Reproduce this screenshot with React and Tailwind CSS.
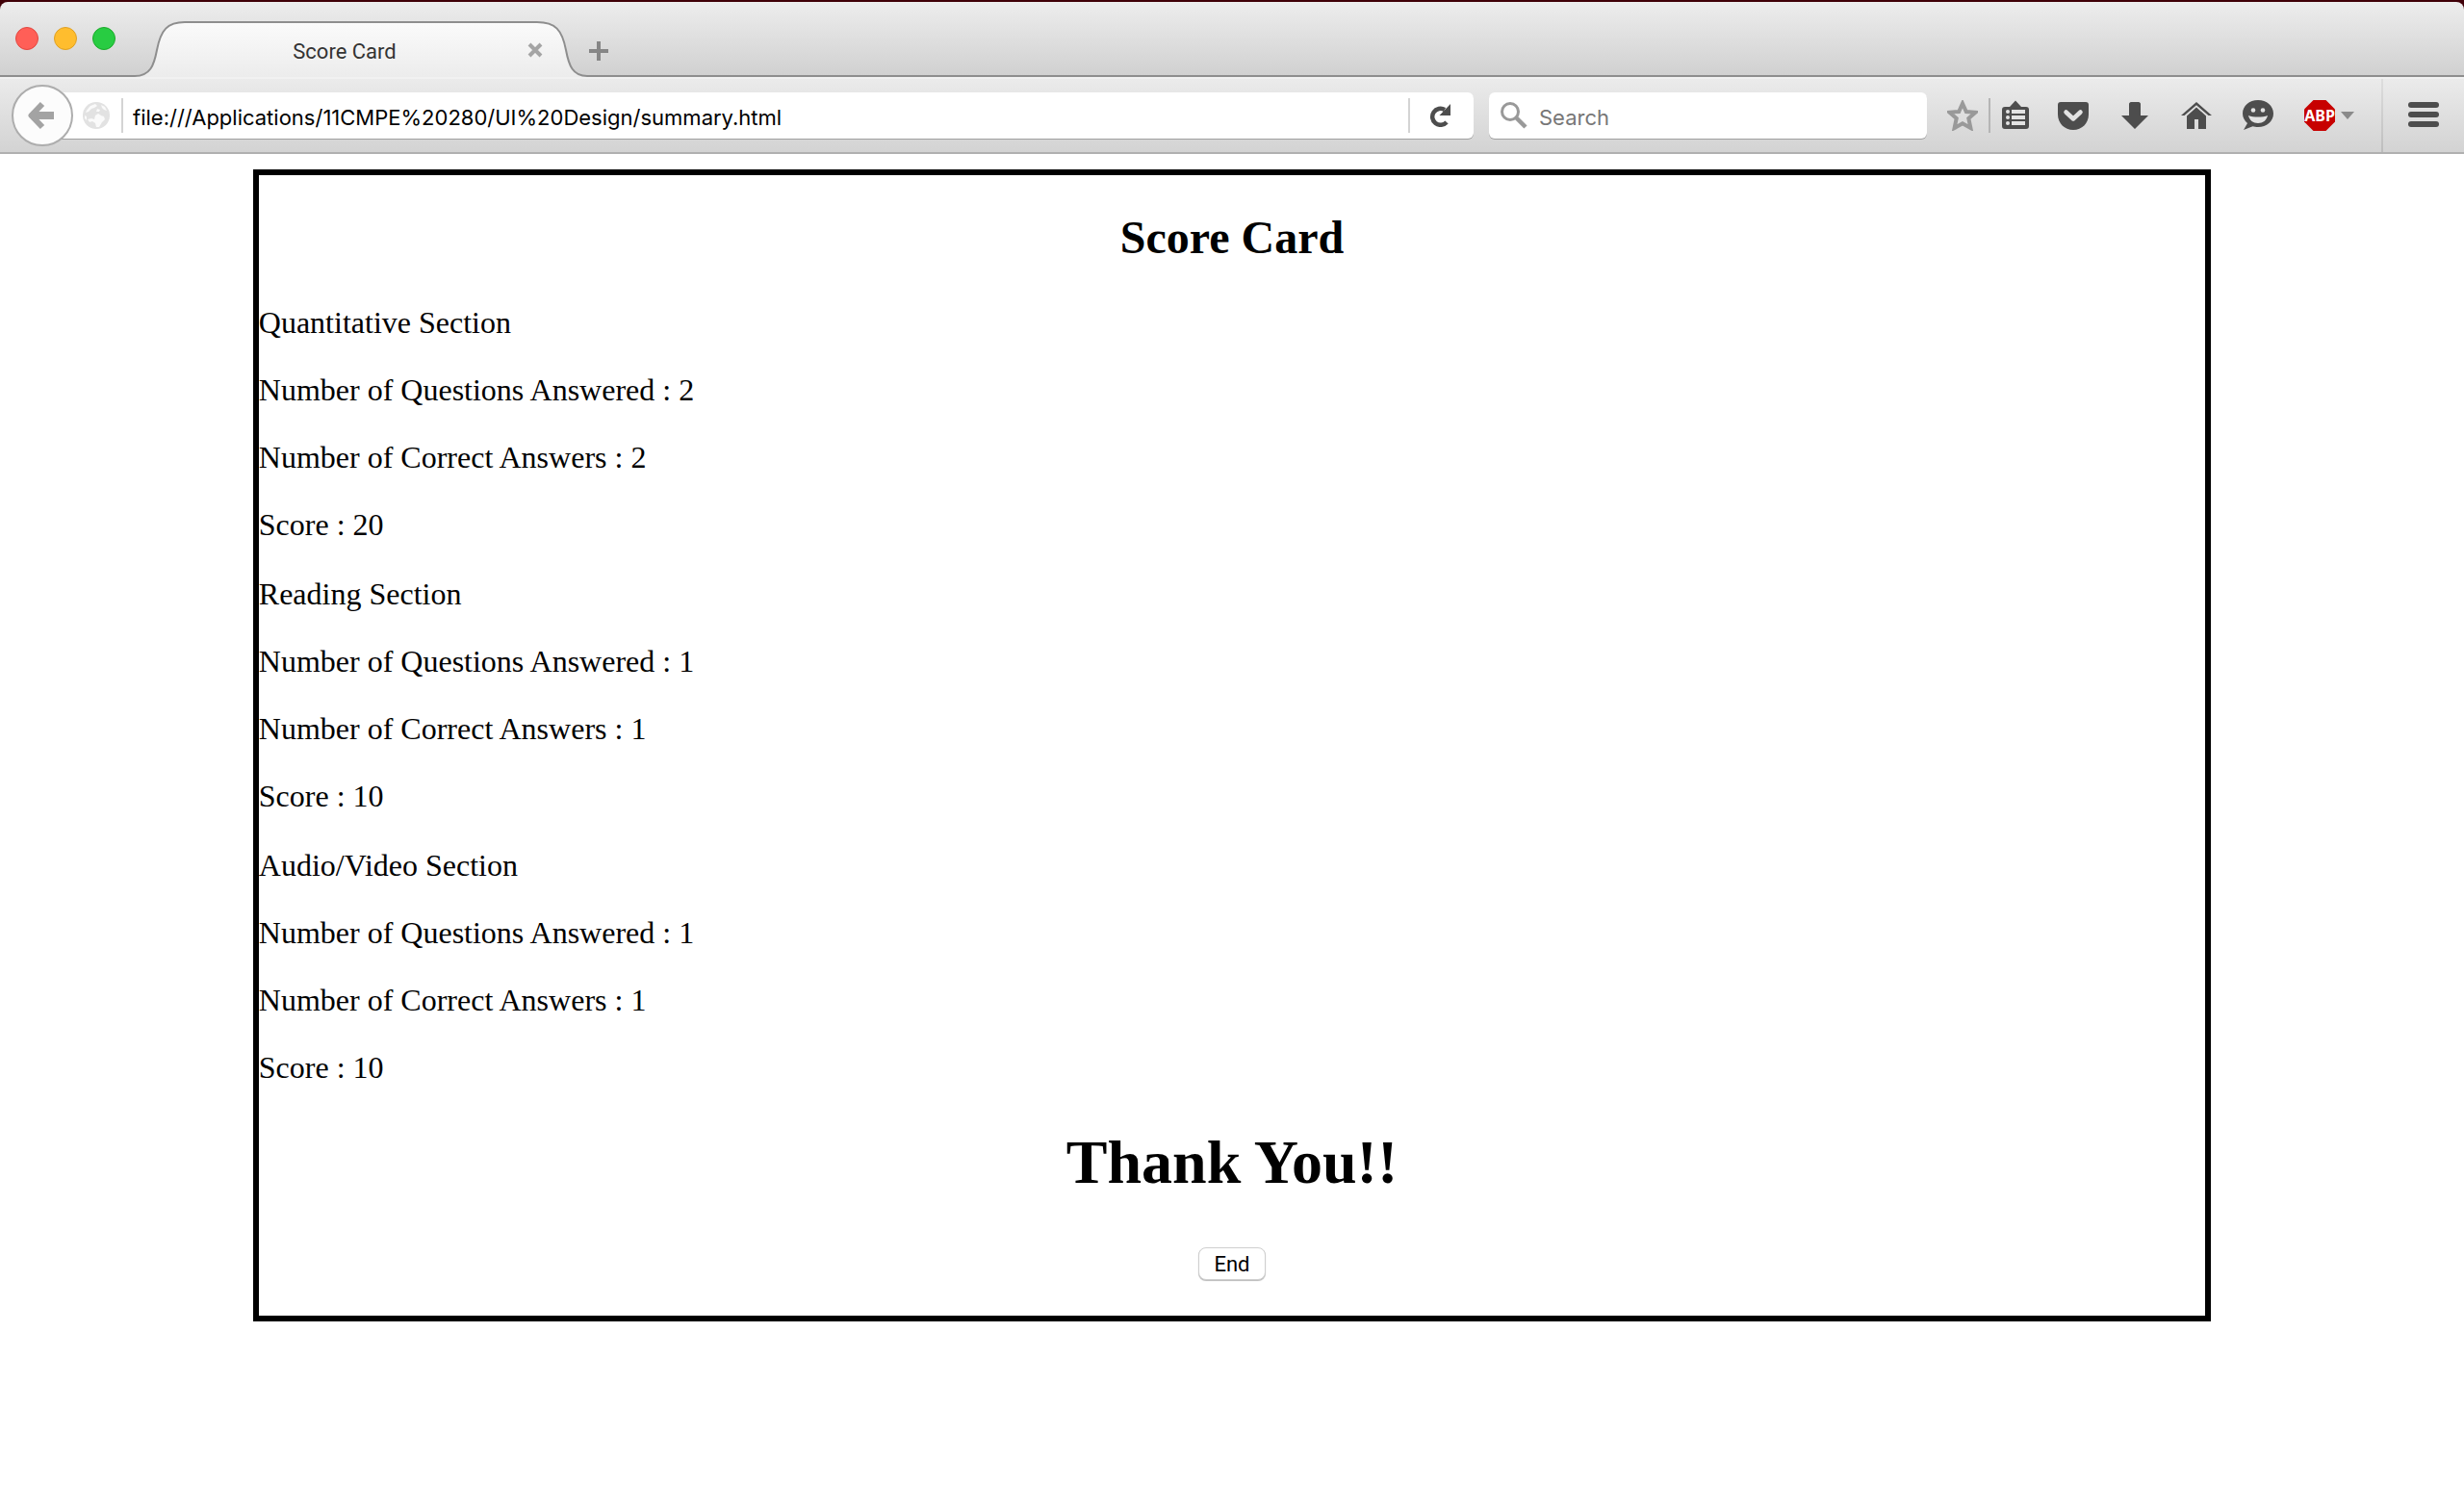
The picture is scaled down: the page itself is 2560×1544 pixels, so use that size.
const sections = [
  { name: "Quantitative Section", answered: 2, correct: 2, score: 20 },
  { name: "Reading Section", answered: 1, correct: 1, score: 10 },
  { name: "Audio/Video Section", answered: 1, correct: 1, score: 10 },
];

function Lights() {
  return (
    <div className="flex gap-4 pl-4 pt-[26px]">
      <button aria-label="Close window" className="size-6 rounded-full border border-[#e2463f] bg-[#ff5f57]" />
      <button aria-label="Minimize window" className="size-6 rounded-full border border-[#dfa023] bg-[#ffbd2e]" />
      <button aria-label="Zoom window" className="size-6 rounded-full border border-[#1aab29] bg-[#28cc42]" />
    </div>
  );
}

function TabBar() {
  return (
    <div className="flex h-[78px] overflow-hidden rounded-t-lg bg-linear-to-b from-[#ededed] to-[#d0d0d0]">
      <div className="w-[140px] shrink-0 border-b-2 border-[#8e8e8e]">
        <Lights />
      </div>
      <div className="relative flex w-[472px] shrink-0 items-center">
        <svg className="absolute inset-0 h-[78px] w-[472px]" viewBox="0 0 472 78" fill="none" aria-hidden="true">
          <defs>
            <linearGradient id="tab" x1="0" y1="20" x2="0" y2="78" gradientUnits="userSpaceOnUse">
              <stop stopColor="#fbfbfb" />
              <stop offset="1" stopColor="#ececec" />
            </linearGradient>
          </defs>
          <path d="M0 77C16 77 20 66 23 50C27 29 34 21 52 21H418C437 21 444 29 448 50C451 66 455 77 470 77H472V79H0Z" fill="url(#tab)" />
          <path d="M0 77C16 77 20 66 23 50C27 29 34 21 52 21H418C437 21 444 29 448 50C451 66 455 77 470 77H472" stroke="#8e8e8e" strokeWidth="2" />
        </svg>
        <span className="relative w-full pr-9 pt-[26px] text-center font-['Roboto','Inter',sans-serif] text-[22px] leading-7 text-[#333]">
          Score Card
        </span>
        <button aria-label="Close tab" className="absolute right-12 top-[42px]">
          <svg className="size-4" viewBox="0 0 16 16" stroke="#a4a4a4" strokeWidth="4">
            <path d="M2 2L14 14M14 2L2 14" />
          </svg>
        </button>
      </div>
      <div className="grow border-b-2 border-[#8e8e8e]">
        <button aria-label="New tab" className="block pt-[41px]">
          <svg className="size-5" viewBox="0 0 20 20" stroke="#868686" strokeWidth="4">
            <path d="M10 0V20M0 10H20" />
          </svg>
        </button>
      </div>
    </div>
  );
}

function IconButton({ label, color = "#4d4d4d", children }) {
  return (
    <button aria-label={label} className="shrink-0">
      <svg className="size-8" viewBox="0 0 32 32" fill={color}>
        {children}
      </svg>
    </button>
  );
}

function AddressBar() {
  return (
    <div className="flex min-w-0 grow items-center">
      <button
        aria-label="Back"
        className="z-10 flex size-16 shrink-0 items-center justify-center rounded-full border-2 border-[#adadad] bg-[#fcfcfc]"
      >
        <svg className="size-8" viewBox="0 0 32 32" fill="none" stroke="#a3a3a3" strokeWidth="8" aria-hidden="true">
          <path d="M5 16H28" />
          <path d="M16 4L4.500 16L16 28" strokeWidth="6" strokeLinejoin="round" />
        </svg>
      </button>
      <div className="-ml-8 flex h-12 min-w-0 grow items-center rounded-r-md bg-white pl-[42px] shadow-[0_1px_0_#a0a0a0]">
        <svg className="size-7 shrink-0" viewBox="0 0 28 28" aria-hidden="true">
          <circle cx="14" cy="14" r="14" fill="#e2e2e2" />
          <g fill="#fafafa">
            <path d="M8 4L13 2L15 4L12 6L9 7L6 10L3 11C4 8 6 6 8 4Z" />
            <path d="M19 3L23 5L25 9L22 8L20 6Z" />
            <path d="M13 14L16 12L19 14L22 15L23 18L20 21L17 26H14L13 22L10 20L7 21L5 18L9 17L12 18Z" />
            <path d="M15 7L18 8L17 10L14 10Z" />
            <path d="M2 14L4 15L4 19L2 17Z" />
          </g>
        </svg>
        <span className="ml-3 h-9 w-0.5 shrink-0 bg-[#d4d4d4]" />
        <input
          aria-label="Address"
          defaultValue="file:///Applications/11CMPE%20280/UI%20Design/summary.html"
          className="ml-2.5 mt-1 min-w-0 grow bg-transparent font-['Inter','Roboto',sans-serif] text-[22px] leading-8 text-black outline-none"
        />
        <span className="h-9 w-0.5 shrink-0 bg-[#d4d4d4]" />
        <button aria-label="Reload" className="ml-5 mr-[22px] shrink-0">
          <svg className="size-6" viewBox="0 0 24 24" aria-hidden="true">
            <path d="M18 19A8.500 8.500 0 1 1 16 6" fill="none" stroke="#4d4d4d" strokeWidth="4.500" />
            <path d="M22 0V12H10.500Z" fill="#4d4d4d" />
          </svg>
        </button>
      </div>
    </div>
  );
}

function Toolbar() {
  return (
    <div className="flex h-20 items-center border-b-2 border-t-2 border-b-[#b0b0b0] border-t-[#f1f1f1] bg-linear-to-b from-[#ebebeb] to-[#d3d3d3] pl-3 pr-[26px]">
      <AddressBar />
      <label className="ml-4 flex h-12 w-[455px] shrink-0 items-center rounded-md bg-white pl-3 shadow-[0_1px_0_#a0a0a0]">
        <svg className="size-7 shrink-0" viewBox="0 0 28 28" fill="none" stroke="#999" aria-hidden="true">
          <circle cx="10" cy="10" r="8.500" strokeWidth="3" />
          <path d="M16 16L26 26" strokeWidth="4.500" />
        </svg>
        <input
          aria-label="Search"
          placeholder="Search"
          className="ml-3 mt-1 min-w-0 grow bg-transparent font-['Inter','Roboto',sans-serif] text-[22px] leading-8 outline-none placeholder:text-[#777]"
        />
      </label>
      <div className="ml-[21px] flex h-full shrink-0 items-center">
        <IconButton label="Bookmark this page" color="none">
          <path
            d="M16 3.500L19.800 12L29.500 12.800L22.300 19L24.400 29L16 24.300L7.600 29L9.700 19L2.500 12.800L12.200 12Z"
            stroke="#999"
            strokeWidth="4"
          />
        </IconButton>
        <span className="ml-[11px] mr-2.5 h-9 w-0.5 bg-[#b5b5b5]" />
        <IconButton label="Show your bookmarks">
          <path d="M10 7L16 0.500L22 7H27C29 7 30 8 30 10V27C30 29 29 30 27 30H5C3 30 2 29 2 27V10C2 8 3 7 5 7Z" />
          <g fill="#e3e3e3">
            <rect x="12" y="10" width="14" height="4" />
            <rect x="12" y="16" width="14" height="4" />
            <rect x="12" y="22" width="14" height="4" />
            <circle cx="8" cy="12" r="2" />
            <circle cx="8" cy="18" r="2" />
            <circle cx="8" cy="24" r="2" />
          </g>
        </IconButton>
        <div className="ml-7 flex items-center gap-8">
          <IconButton label="Save to Pocket">
            <path d="M3 2H29C31 2 32 3 32 5V15C32 24 25 31 16 31S0 24 0 15V5C0 3 1 2 3 2Z" />
            <path d="M8.500 12.500L16 19.500L23.500 12.500" fill="none" stroke="#e3e3e3" strokeWidth="4.500" strokeLinecap="round" strokeLinejoin="round" />
          </IconButton>
          <IconButton label="Downloads">
            <path d="M12 2H20C21 2 22 3 22 4V16H30L16 30L2 16H10V4C10 3 11 2 12 2Z" />
          </IconButton>
          <IconButton label="Home">
            <path d="M0 16L16 2L32 16H28.500L16 5.200L3.500 16Z" />
            <path d="M16 7.500L26 16.500V30H18V20H14V30H6V16.500Z" />
          </IconButton>
          <IconButton label="Start a conversation">
            <path d="M16 0C25 0 32 6 32 14S25 28 16 28C14 28 12 27.700 10.500 27.200L1 31L5 24C2 21.500 0 18 0 14C0 6 7 0 16 0Z" />
            <g fill="#e3e3e3">
              <circle cx="11" cy="10.500" r="2.300" />
              <circle cx="21" cy="10.500" r="2.300" />
              <path d="M6 16C11 18 21 18 26 16C25 21 21 24 16 24S7 21 6 16Z" />
            </g>
          </IconButton>
          <button aria-label="Adblock Plus" className="flex items-center gap-1.5">
            <svg className="size-8" viewBox="0 0 32 32">
              <path d="M9.500 0H22.500L32 9.500V22.500L22.500 32H9.500L0 22.500V9.500Z" fill="#c70000" />
              <text x="16" y="22" textAnchor="middle" fill="#fff" className="font-['Noto_Sans',sans-serif] text-[16px] font-bold">
                ABP
              </text>
            </svg>
            <svg className="h-2 w-3.5" viewBox="0 0 14 8" fill="#8a8a8a">
              <path d="M0 0H14L7 8Z" />
            </svg>
          </button>
        </div>
        <span className="ml-7 mr-[26px] h-full w-0.5 bg-linear-to-b from-[#dedede] to-[#bdbdbd]" />
        <IconButton label="Open menu">
          <rect y="2" width="32" height="6" rx="3" />
          <rect y="12" width="32" height="6" rx="3" />
          <rect y="22" width="32" height="6" rx="3" />
        </IconButton>
      </div>
    </div>
  );
}

function Section({ name, answered, correct, score }) {
  return (
    <section className="flex flex-col gap-8 text-[32px] leading-[38px]">
      <p>{name}</p>
      <p>Number of Questions Answered : {answered}</p>
      <p>Number of Correct Answers : {correct}</p>
      <p>Score : {score}</p>
    </section>
  );
}

export default function App() {
  return (
    <div className="min-h-screen bg-white">
      <header className="bg-[#400008] pt-0.5">
        <TabBar />
        <Toolbar />
      </header>
      <main className="px-4 py-4 font-['Liberation_Serif',serif] text-black">
        <div className="mx-auto box-content w-4/5 border-[6px] border-black pb-[37px] pt-9">
          <h2 className="text-center text-5xl leading-[58px] font-bold">Score Card</h2>
          <div className="mt-10 flex flex-col gap-[34px]">
            {sections.map((section) => (
              <Section key={section.name} {...section} />
            ))}
          </div>
          <h1 className="mt-11 text-center text-[64px] leading-[72px] font-bold">Thank You!!</h1>
          <button className="mx-auto mt-13 block h-[34px] rounded-lg border border-[#cfcfcf] bg-white px-[15px] pt-0.5 font-['Roboto',sans-serif] text-[22px] leading-7 shadow-[0_1px_1px_#b8b8b8]">
            End
          </button>
        </div>
      </main>
    </div>
  );
}
